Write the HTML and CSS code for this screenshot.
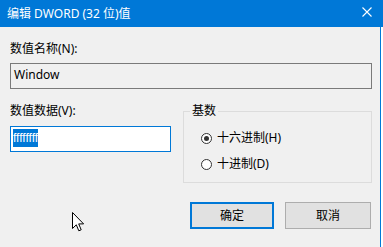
FILE: index.html
```html
<!DOCTYPE html>
<html lang="zh-CN">
<head>
<meta charset="utf-8">
<title>编辑 DWORD (32 位)值</title>
<link rel="stylesheet" href="styles.css">
</head>
<body>
<div class="titlebar">
  <span class="title">编辑 DWORD (32 位)值</span>
  <svg class="close" width="10" height="10" viewBox="0 0 10 10"><path d="M0.5 0.5 L9.5 9.5 M9.5 0.5 L0.5 9.5" stroke="#fff" stroke-width="1.1" fill="none"/></svg>
</div>
<div class="client">
  <div class="label">数值名称(N):</div>
  <div class="edit readonly">Window</div>
  <div class="row">
    <div class="col-left">
      <div class="label">数值数据(V):</div>
      <div class="edit focused"><span class="sel">ffffffff</span></div>
    </div>
    <fieldset class="group">
      <legend>基数</legend>
      <div class="radio-row"><span class="radio checked"></span><span>十六进制(H)</span></div>
      <div class="radio-row second"><span class="radio"></span><span>十进制(D)</span></div>
    </fieldset>
  </div>
  <div class="buttons">
    <div class="btn default">确定</div>
    <div class="btn cancel">取消</div>
  </div>
</div>
<svg class="cursor" width="13" height="21" viewBox="0 0 13 21"><path d="M0.5 0.5 L0.5 16.5 L4.3 12.8 L6.8 18.8 L9.2 17.8 L6.7 11.9 L11.6 11.9 Z" fill="#fff" stroke="#000" stroke-width="1" stroke-linejoin="miter"/></svg>
</body>
</html>
```

FILE: styles.css
```css
html, body {
  margin: 0;
  padding: 0;
  background: #ffffff;
  width: 383px;
  height: 247px;
  overflow: hidden;
  font-family: "Noto Sans", "Noto Sans CJK SC", sans-serif;
  font-size: 12px;
  color: #000;
}

body {
  position: relative;
}

.titlebar {
  height: 27px;
  background: #0078d7;
  color: #fff;
  display: flex;
  align-items: center;
  justify-content: space-between;
  padding: 0 11px 0 7px;
  box-sizing: border-box;
}

.title {
  line-height: 16px;
}

.close {
  display: block;
  margin-top: -3px;
}

.client {
  width: 380px;
  height: 220px;
  background: #f0f0f0;
  border-right: 1px solid #0078d7;
  box-sizing: content-box;
  padding: 0;
}

.client > .label:first-child {
  padding-top: 14px;
}

.label {
  line-height: 16px;
  margin-left: 10px;
}

.col-left .label {
  margin-left: 0;
}

.edit {
  box-sizing: border-box;
  height: 26px;
  border: 1px solid #7a7a7a;
  line-height: 18px;
  padding: 2px 0 0 3px;
  white-space: nowrap;
}

.readonly {
  margin: 6px 8px 0 10px;
  background: #f0f0f0;
}

.focused {
  margin-top: 7px;
  background: #fff;
  border-color: #0078d7;
  padding-left: 2px;
}

.sel {
  display: inline-block;
  background: #0078d7;
  color: #fff;
  line-height: 18px;
  font-family: "Liberation Sans", sans-serif;
  padding: 0;
}

.row {
  display: flex;
  align-items: flex-start;
  margin: 14px 8px 0 10px;
  gap: 12px;
}

.col-left {
  width: 161px;
}

.group {
  flex: 1;
  margin: 0;
  padding: 11px 0 10px 17px;
  border: 1px solid #dcdcdc;
  min-inline-size: 0;
  height: 80px;
  box-sizing: border-box;
}

.group legend {
  padding: 0 2px;
  margin-left: -11px;
  line-height: 16px;
}

.radio-row {
  display: flex;
  align-items: center;
  gap: 5px;
  line-height: 16px;
  height: 16px;
}

.radio-row.second {
  margin-top: 10px;
}

.radio {
  box-sizing: border-box;
  width: 11px;
  height: 11px;
  border: 1px solid #333;
  border-radius: 50%;
  background: #fff;
  display: flex;
  align-items: center;
  justify-content: center;
}

.radio.checked::after {
  content: "";
  width: 5px;
  height: 5px;
  border-radius: 50%;
  background: #333;
}

.buttons {
  display: flex;
  justify-content: flex-end;
  gap: 11px;
  margin: 19px 9px 0 0;
}

.btn {
  box-sizing: border-box;
  height: 27px;
  background: #e1e1e1;
  border: 1px solid #adadad;
  display: flex;
  align-items: center;
  justify-content: center;
  line-height: 16px;
}

.btn.default {
  width: 84px;
  border: 2px solid #0078d7;
}

.btn.cancel {
  width: 86px;
}

.cursor {
  position: absolute;
  left: 72px;
  top: 212px;
}
```
